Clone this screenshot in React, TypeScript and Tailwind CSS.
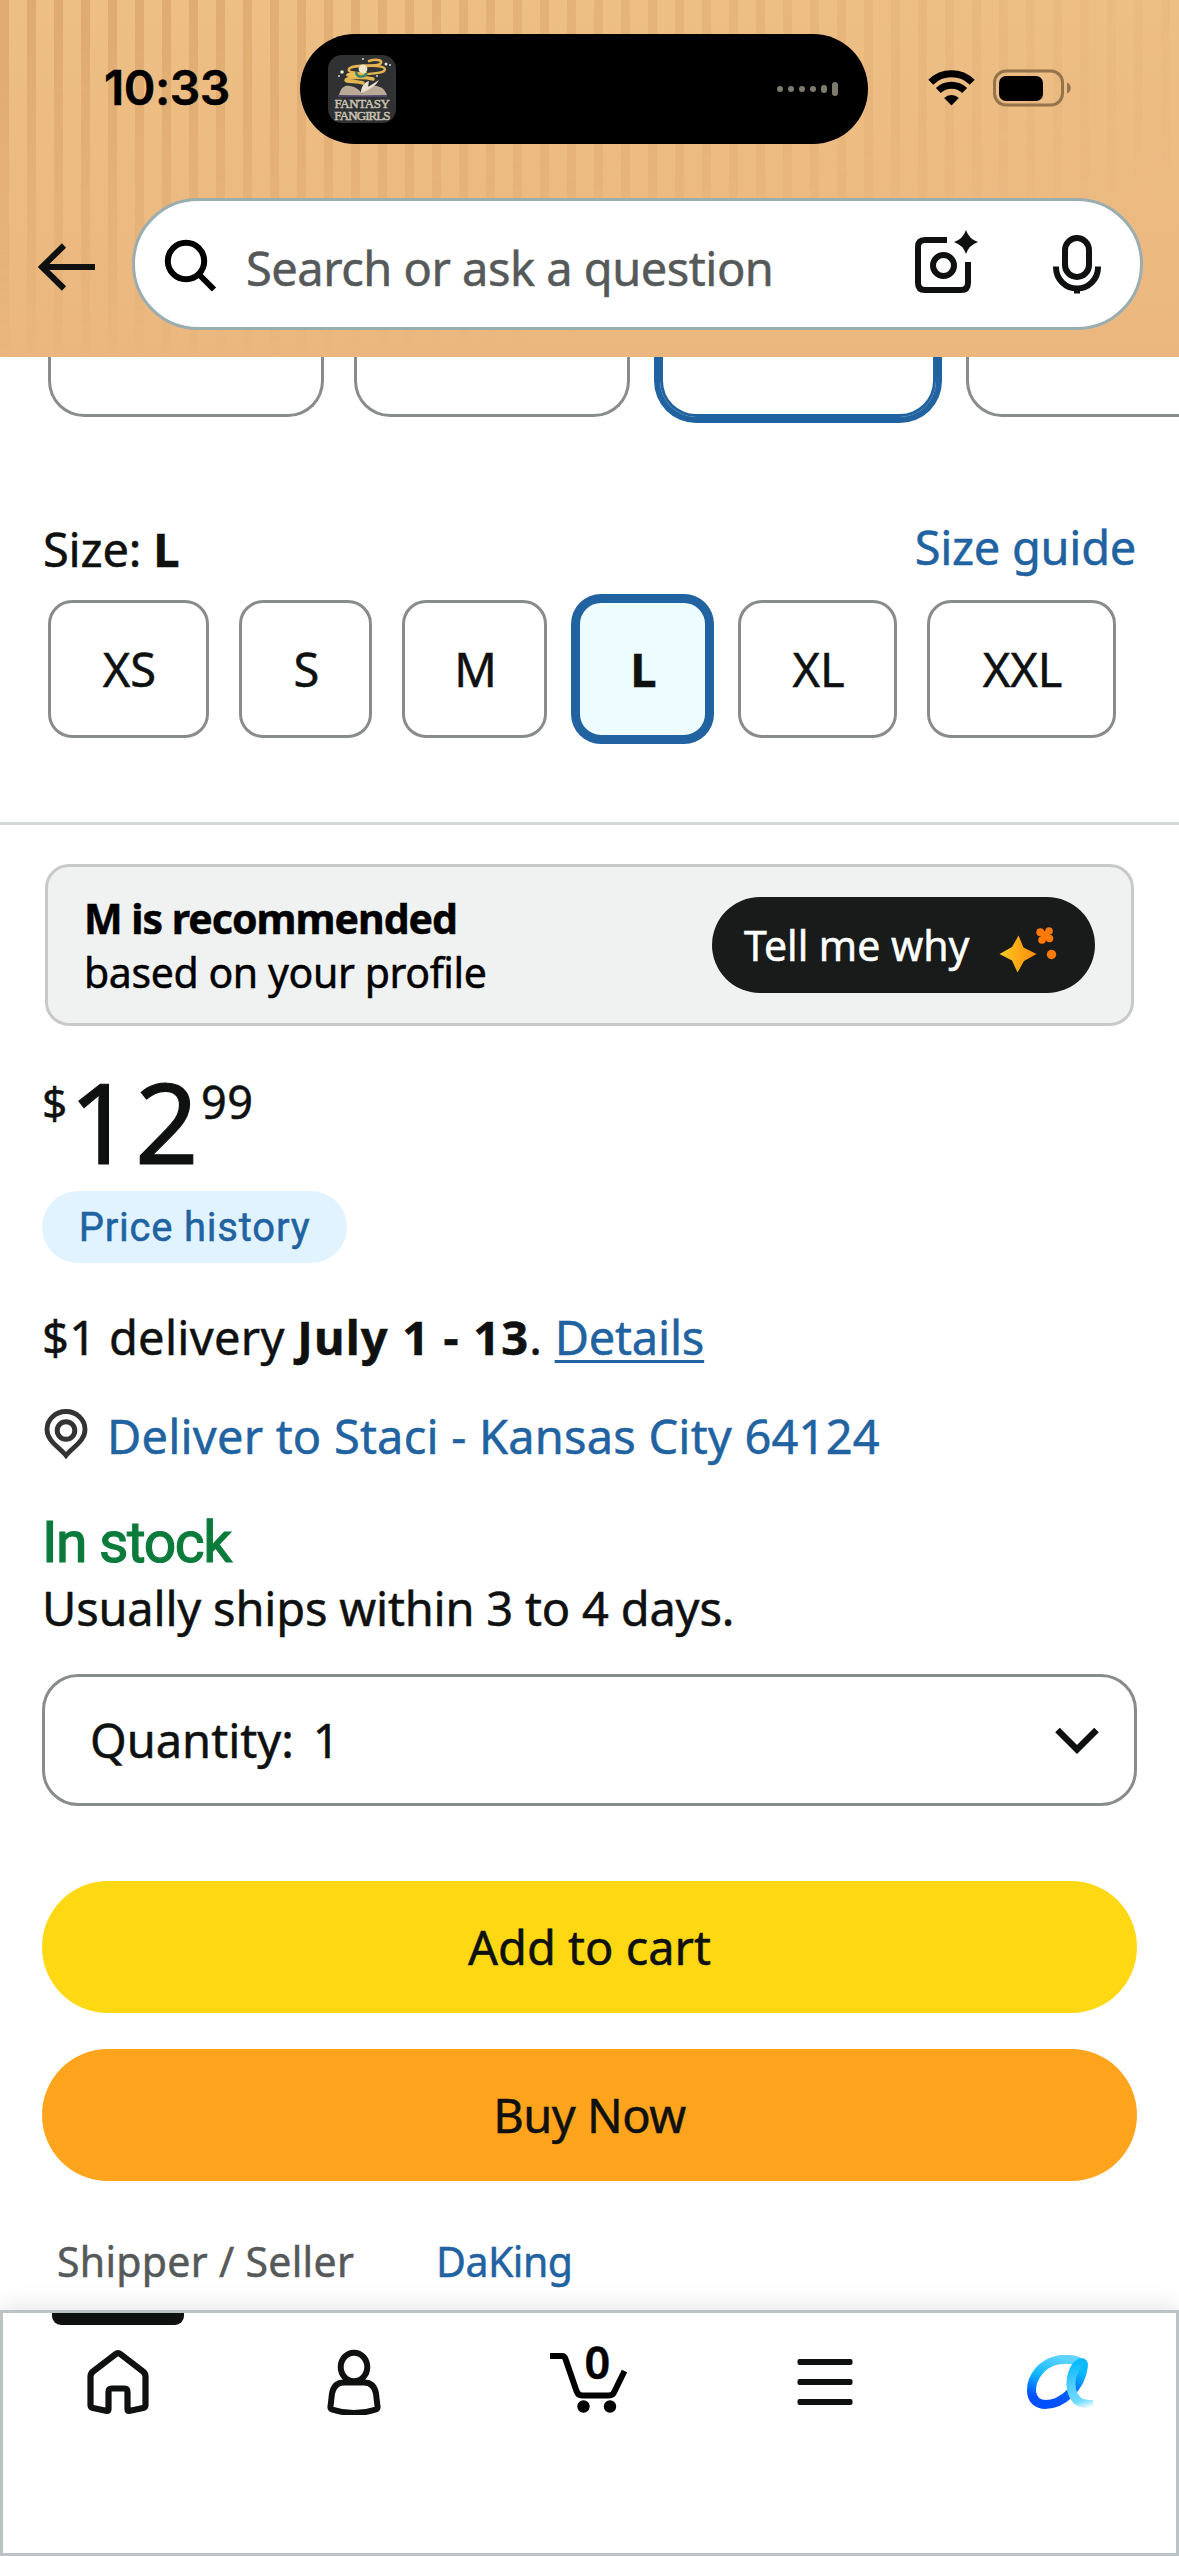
import { useState } from 'react';
import clsx from 'clsx';

const SIZES = [
  { label: 'XS', width: 'w-[161px]' },
  { label: 'S', width: 'w-[133px]' },
  { label: 'M', width: 'w-[145px]' },
  { label: 'L', width: 'w-[131px]' },
  { label: 'XL', width: 'w-[159px]' },
  { label: 'XXL', width: 'w-[189px]' },
];

const COLORS = ['color-1', 'color-2', 'color-3', 'color-4'];

/* ---------- icons ---------- */

function PodcastArt() {
  return (
    <div className="relative h-[68px] w-[68px]">
      <svg width="68" height="68" viewBox="0 0 68 68">
        <rect width="68" height="68" rx="14" fill="#2f3132" />
        <g fill="none" stroke="#e3b552" strokeLinecap="round">
          <path d="M41 6c9-3 15 0 11 3-5 3-24 0-30 4-5 4 6 6 16 5" strokeWidth="2.6" />
          <path d="M38 11c12-1 22 1 18 5-4 3-14 2-24 4-8 1-14 1-11-1" strokeWidth="2.4" />
          <path d="M45 24c-8-2-26-2-27 1-1 2 10 1 17 3" strokeWidth="3.4" />
        </g>
        <ellipse cx="25" cy="20" rx="7" ry="2.6" fill="#e9bf56" />
        <path d="M28 17c1 6 8 6 11 1" fill="none" stroke="#2f8469" strokeWidth="2.4" />
        <circle cx="35" cy="14" r="4.4" fill="#f1e6cd" />
        <path d="M11 40c2-8 6-10 11-9 6 1 10 4 12 8 2-4 5-8 8-8 8-1 14 1 17 9l-25 1z" fill="#b9aa98" />
        <path d="M33 38c0-7 4-11 8-12l-1 6 11-7c-3 6-9 9-17 13z" fill="#e8dfcd" />
        <path d="M10 41h49" stroke="#5d4b7d" strokeWidth="1.6" />
        <g fill="#e8e4d8">
          <circle cx="14" cy="17" r="1.8" />
          <circle cx="11" cy="21" r="0.9" />
          <circle cx="35" cy="4" r="0.9" />
          <circle cx="58" cy="9" r="1.5" />
          <circle cx="62" cy="10" r="0.9" />
          <circle cx="49" cy="21" r="0.9" />
        </g>
      </svg>
      <div className="absolute inset-x-0 top-[43px] flex flex-col items-center font-['Liberation_Serif',serif] text-[13px] leading-[11.5px] text-[#c9c2b4]">
        <span className="tracking-[-0.4px]">FANTASY</span>
        <span className="tracking-[-0.9px]">FANGIRLS</span>
      </div>
    </div>
  );
}

function AudioDots() {
  return (
    <svg width="62" height="16" viewBox="0 0 62 16" fill="#7d7b6e">
      <circle cx="3" cy="8" r="3" />
      <circle cx="14" cy="8" r="3" />
      <circle cx="25" cy="8" r="3" />
      <circle cx="36" cy="8" r="3" />
      <rect x="44" y="4" width="6" height="8" rx="3" />
      <rect x="55" y="1" width="6" height="14" rx="3" />
    </svg>
  );
}

function WifiIcon() {
  return (
    <svg width="47" height="36" viewBox="0 0 47 36">
      <path d="M2.8 12.2a29.5 29.5 0 0 1 41.4 0" fill="none" stroke="#000" strokeWidth="7" />
      <path d="M10.3 20.6a19 19 0 0 1 26.4 0" fill="none" stroke="#000" strokeWidth="7" />
      <path d="M23.5 35.5 16.2 28a10.5 10.5 0 0 1 14.6 0z" fill="#000" />
    </svg>
  );
}

function BatteryIcon() {
  return (
    <svg width="79" height="38" viewBox="0 0 79 38">
      <rect x="1.5" y="2" width="68" height="34" rx="11.5" fill="none" stroke="#94734d" strokeWidth="3" />
      <rect x="6" y="7" width="44" height="25" rx="7" fill="#000" />
      <path d="M74 13.5c5 2 5 9 0 11z" fill="#94734d" />
    </svg>
  );
}

function BackIcon() {
  return (
    <svg width="58" height="48" viewBox="0 0 58 48" fill="none" stroke="#0f1111" strokeWidth="6">
      <path d="M57 24H4M26 2.500 4 24l22 21.500" />
    </svg>
  );
}

function SearchIcon() {
  return (
    <svg width="54" height="54" viewBox="0 0 54 54" fill="none" stroke="#000" strokeWidth="6">
      <circle cx="22" cy="22" r="18.200" />
      <path d="m34.500 35 15.500 15.500" />
    </svg>
  );
}

function CameraSparkleIcon() {
  return (
    <svg width="66" height="66" viewBox="0 0 66 66">
      <g fill="none" stroke="#0f1111" strokeWidth="6">
        <path d="M33 10H11q-7 0-7 7v36q0 7 7 7h36q7 0 7-7V32" />
        <circle cx="29.500" cy="35.500" r="10.500" />
      </g>
      <path d="M52 0q3 9 12 12-9 3-12 12-3-9-12-12 9-3 12-12z" fill="#0f1111" />
    </svg>
  );
}

function MicIcon() {
  return (
    <svg width="48" height="60" viewBox="0 0 48 60" fill="none" stroke="#0f1111" strokeWidth="6">
      <rect x="12" y="4" width="24" height="39" rx="12" />
      <path d="M3 32.500v1a21 21 0 0 0 42 0v-1M24 53v6.500" />
    </svg>
  );
}

function SparklesIcon() {
  return (
    <svg width="58" height="54" viewBox="0 0 58 54">
      <defs>
        <linearGradient id="spark" x1="0" x2="1">
          <stop offset="0" stopColor="#fccb22" />
          <stop offset="1" stopColor="#fd8a0b" />
        </linearGradient>
      </defs>
      <path
        d="m19.500 8.500 5 12L37.500 27 25 34l-6.500 11.500-5.500-12L.5 27l12.500-7z"
        fill="url(#spark)"
      />
      <g fill="#ff7a05">
        <circle cx="41.300" cy="5.300" r="4" />
        <circle cx="50" cy="4" r="3.800" />
        <circle cx="43" cy="13" r="3.800" />
        <circle cx="50.500" cy="11.500" r="3.800" />
        <circle cx="46.500" cy="8.500" r="4.500" />
        <circle cx="52.500" cy="27.500" r="4.700" />
      </g>
    </svg>
  );
}

function PinIcon() {
  return (
    <svg width="44" height="50" viewBox="0 0 44 50" fill="none" stroke="#333" strokeWidth="4.800">
      <path d="M22 46.500C15 38 3 32 3 20.500a19 18 0 0 1 38 0C41 32 29 38 22 46.500z" />
      <circle cx="22" cy="21.500" r="8.800" strokeWidth="5" />
    </svg>
  );
}

function ChevronIcon() {
  return (
    <svg width="44" height="30" viewBox="0 0 44 30" fill="none" stroke="#0f1111" strokeWidth="6.500">
      <path d="M2.500 4 22 23.500 41.500 4" />
    </svg>
  );
}

function HomeIcon() {
  return (
    <svg width="64" height="66" viewBox="0 0 64 66" fill="none" stroke="#0f1111" strokeWidth="6.200" strokeLinejoin="round">
      <path d="M29.500 5.200q2.500-2 5 0L57 22.500q2.500 2 2.500 5V56q0 2.500-2.500 3l-14 3q-1.500 0-1.500-2V43q0-3.500-3-3.500h-13q-3 0-3 3.500v17q0 2-1.500 2L7 59q-2.500-.5-2.500-3V27.500q0-3 2.500-5z" />
    </svg>
  );
}

function UserIcon() {
  return (
    <svg width="56" height="66" viewBox="0 0 56 66" fill="none" stroke="#0f1111" strokeWidth="6">
      <ellipse cx="28" cy="18" rx="13.300" ry="14.300" />
      <path
        d="M18 33.500h20q10 0 12 11l1.500 13q.3 2-1.500 3-22 7-44 0-1.800-1-1.500-3L6 44.500q2-11 12-11z"
        strokeLinejoin="round"
      />
    </svg>
  );
}

function CartIcon() {
  return (
    <svg width="78" height="70" viewBox="0 0 78 70">
      <path
        d="M0 12h12q2.500 0 3.500 3l11 32q1.500 4.500 5.500 4.500h27q4 0 5.500-4L74.500 27"
        fill="none"
        stroke="#000"
        strokeWidth="6"
      />
      <circle cx="33.500" cy="62.500" r="6.200" />
      <circle cx="60" cy="62.500" r="6.200" />
    </svg>
  );
}

function MenuIcon() {
  return (
    <svg width="56" height="48" viewBox="0 0 56 48" fill="#0f1111">
      <rect x="0.500" width="55" height="6" rx="2" />
      <rect x="0.500" y="20" width="55" height="6" rx="2" />
      <rect x="0.500" y="40" width="55" height="6" rx="2" />
    </svg>
  );
}

function AssistantIcon() {
  return (
    <svg width="68" height="56" viewBox="0 0 68 56" fill="none" strokeWidth="9">
      <defs>
        <linearGradient id="loop" x1="0.8" y1="0" x2="0.45" y2="1">
          <stop offset="0" stopColor="#60d4ff" />
          <stop offset="0.5" stopColor="#10b8ff" />
          <stop offset="0.95" stopColor="#0050ff" />
        </linearGradient>
        <linearGradient id="rise" gradientUnits="userSpaceOnUse" x1="34" y1="48" x2="56" y2="8">
          <stop offset="0" stopColor="#0050ff" />
          <stop offset="0.35" stopColor="#0068ff" />
          <stop offset="0.8" stopColor="#0abcff" />
        </linearGradient>
        <linearGradient id="tail" gradientUnits="userSpaceOnUse" x1="52" y1="8" x2="66" y2="52">
          <stop offset="0" stopColor="#0ebaff" />
          <stop offset="0.4" stopColor="#4fcdff" />
          <stop offset="0.8" stopColor="#72dcff" />
          <stop offset="1" stopColor="#72dcff" stopOpacity="0" />
        </linearGradient>
      </defs>
      <path d="M52 6.500C38 2 22 4 12 16 2 28 0 49.500 19 49.500" stroke="url(#loop)" />
      <path d="M18 49.500C36 49.500 54 32 56.500 11" stroke="url(#rise)" />
      <circle cx="54.500" cy="9.500" r="6.500" fill="#0ebaff" />
      <path d="M53.500 8C46 11 41.500 27 45.500 38c3 8 7.500 11.500 20.500 11.500" stroke="url(#tail)" />
    </svg>
  );
}

/* ---------- sections ---------- */

function StatusBar() {
  return (
    <div className="relative flex h-[198px] items-start">
      <span className="mt-[60px] ml-[104px] w-[196px] font-[Inter,sans-serif] text-[48px] leading-[56px] font-semibold tracking-[-0.5px] text-black">
        10:33
      </span>
      <div className="mt-[34px] flex h-[110px] w-[568px] items-center justify-between rounded-full bg-black pr-[29px] pl-[28px]">
        <PodcastArt />
        <AudioDots />
      </div>
      <div className="mt-[69px] ml-[60px] flex items-center gap-[18px]">
        <WifiIcon />
        <BatteryIcon />
      </div>
    </div>
  );
}

function SearchBar() {
  return (
    <div className="relative flex items-center pl-[38px]">
      <div className="mt-[6px]">
        <BackIcon />
      </div>
      <div className="ml-[36px] flex h-[132px] w-[1011px] items-center rounded-[66px] border-3 border-[#9aadaf] bg-white">
        <div className="mt-[4px] ml-[29px]">
          <SearchIcon />
        </div>
        <span className="mt-[8px] ml-[28px] grow text-[47px] leading-[60px] tracking-[-0.5px] whitespace-nowrap text-[#565959]">
          Search or ask a question
        </span>
        <div className="mr-[73px] mb-[2px]">
          <CameraSparkleIcon />
        </div>
        <div className="mr-[39px]">
          <MicIcon />
        </div>
      </div>
    </div>
  );
}

function Header() {
  return (
    <header className="relative z-10 h-[357px] shrink-0 bg-linear-to-b from-[#edbf85] to-[#ebb77f]">
      <div className="absolute inset-0 bg-[repeating-linear-gradient(90deg,#b8763a48_0_9px,transparent_9px_27px)] [mask-image:radial-gradient(1350px_370px_at_0_0,black,transparent)]" />
      <StatusBar />
      <SearchBar />
    </header>
  );
}

function ColorRow() {
  return (
    <div className="flex gap-[30px] pl-[48px]">
      {COLORS.map((id, i) => (
        <div
          key={id}
          className={clsx(
            'h-[60px] w-[276px] shrink-0 rounded-b-[36px] border-3 border-t-0',
            i === 2 ? 'border-[#2162a1] ring-6 ring-[#2162a1]' : 'border-[#888c8c]',
          )}
        />
      ))}
    </div>
  );
}

function SizePicker() {
  const [selected, setSelected] = useState('L');

  return (
    <section>
      <div className="mt-[99px] flex h-[84px] items-start justify-between pr-[43px] pl-[43px] leading-[60px]">
        <p className="pt-[3px] tracking-[-0.2px]">
          Size: <b>{selected}</b>
        </p>
        <a className="pt-[1px] tracking-[-0.3px] text-[#2162a1]">Size guide</a>
      </div>
      <div className="flex gap-[30px] pl-[48px]">
        {SIZES.map(({ label, width }) => (
          <button
            key={label}
            onClick={() => setSelected(label)}
            className={clsx(
              'h-[138px] rounded-[24px] border-3 pt-[1px] pl-[2px]',
              width,
              label === selected
                ? 'border-[#2162a1] bg-[#edfdff] font-bold ring-6 ring-[#2162a1]'
                : 'border-[#888c8c] bg-white',
            )}
          >
            {label}
          </button>
        ))}
      </div>
    </section>
  );
}

function Recommendation() {
  return (
    <div className="mx-[45px] mt-[39px] flex h-[162px] items-center justify-between rounded-[24px] border-3 border-[#c8caca] bg-[#f0f2f2] pr-[36px] pl-[36px] text-[41px] leading-[54px] text-black">
      <div>
        <p className="font-bold tracking-[-1px]">M is recommended</p>
        <p className="tracking-[-0.4px]">based on your profile</p>
      </div>
      <button className="flex h-[96px] w-[383px] items-center rounded-full bg-[#191b1a] pl-[32px] text-white">
        <span className="w-[255px] text-left whitespace-nowrap">Tell me why</span>
        <div className="mt-[18px]">
          <SparklesIcon />
        </div>
      </button>
    </div>
  );
}

function PriceBlock() {
  return (
    <div className="mt-[40px] flex flex-col items-start pl-[42px]">
      <div className="flex h-[111px] items-start">
        <span className="mt-[14px] w-[27px] text-[44px] leading-[44px]">$</span>
        <span className="text-[111px] leading-[111px] tracking-[2.5px] [-webkit-text-stroke:1.2px]">12</span>
        <span className="mt-[14px] text-[45px] leading-[44px] tracking-[0.5px]">99</span>
      </div>
      <button className="mt-[14px] flex h-[72px] w-[305px] items-center justify-center rounded-full bg-[#e0f3ff] pt-[2px] font-[Roboto,sans-serif] text-[40px] tracking-[0.8px] text-[#2162a1]">
        Price history
      </button>
    </div>
  );
}

function Delivery() {
  return (
    <div className="px-[42px] leading-[60px] whitespace-nowrap">
      <p className="mt-[44px] tracking-[0.3px]">
        $1 delivery <b className="tracking-[1.15px]">July 1 - 13</b>.{' '}
        <a className="tracking-[-0.2px] text-[#2162a1] underline decoration-3 underline-offset-[5px]">
          Details
        </a>
      </p>
      <div className="mt-[39px] flex items-center">
        <div className="mb-[4px] ml-[2px] w-[63px]">
          <PinIcon />
        </div>
        <a className="tracking-[0.2px] text-[#2162a1]">Deliver to Staci - Kansas City 64124</a>
      </div>
      <p className="mt-[47px] font-[Roboto,sans-serif] text-[57px] tracking-[-1.4px] text-[#0b7b3c] [-webkit-text-stroke:1.2px]">
        In stock
      </p>
      <p className="mt-[5px] tracking-[-0.2px]">Usually ships within 3 to 4 days.</p>
    </div>
  );
}

function BuyBox() {
  return (
    <div className="flex flex-col px-[42px]">
      <button className="mt-[36px] flex h-[132px] items-center rounded-[36px] border-3 border-[#888c8c] pr-[35px] pl-[45px]">
        <span>Quantity:</span>
        <span className="ml-[19px] grow text-left">1</span>
        <div className="pt-[2px]">
          <ChevronIcon />
        </div>
      </button>
      <button className="mt-[75px] h-[132px] rounded-full bg-[#ffd814]">Add to cart</button>
      <button className="mt-[36px] h-[132px] rounded-full bg-[#ffa41c] tracking-[-0.5px]">Buy Now</button>
      <div className="mt-[50px] flex pl-[15px] text-[41px] leading-[60px]">
        <span className="w-[379px] tracking-[0.3px] text-[#565959]">Shipper / Seller</span>
        <a className="tracking-[-0.5px] text-[#2162a1]">DaKing</a>
      </div>
    </div>
  );
}

function BottomNav() {
  return (
    <nav className="relative mt-auto h-[246px] shrink-0 border-3 border-[#bbc3c4] bg-white shadow-[0_0_24px_#0f111122]">
      <div className="absolute top-0 left-[49px] h-[12px] w-[132px] rounded-b-[9px] bg-[#0f1111]" />
      <div className="-mx-[3px] flex">
        <div className="flex flex-1 justify-center pt-[36px]">
          <HomeIcon />
        </div>
        <div className="flex flex-1 justify-center pt-[36px]">
          <UserIcon />
        </div>
        <div className="flex flex-1 justify-center pt-[31px]">
          <div className="relative h-[70px]">
            <CartIcon />
            {/* item count sits inside the basket */}
            <span className="absolute top-0 left-[33px] w-[28px] text-center text-[45px] leading-[36px] font-semibold text-black">
              0
            </span>
          </div>
        </div>
        <div className="flex flex-1 justify-center pt-[46px]">
          <MenuIcon />
        </div>
        <div className="flex flex-1 justify-center pt-[42px]">
          <AssistantIcon />
        </div>
      </div>
    </nav>
  );
}

export default function App() {
  return (
    <div className="flex h-[2556px] w-[1179px] flex-col overflow-hidden bg-white font-['Noto_Sans','Open_Sans',sans-serif] text-[47px] text-[#0f1111] [-webkit-text-stroke:0.5px]">
      <Header />
      <ColorRow />
      <SizePicker />
      <div className="mt-[84px] h-[3px] shrink-0 bg-[#d5d9d9]" />
      <Recommendation />
      <PriceBlock />
      <Delivery />
      <BuyBox />
      <BottomNav />
    </div>
  );
}
